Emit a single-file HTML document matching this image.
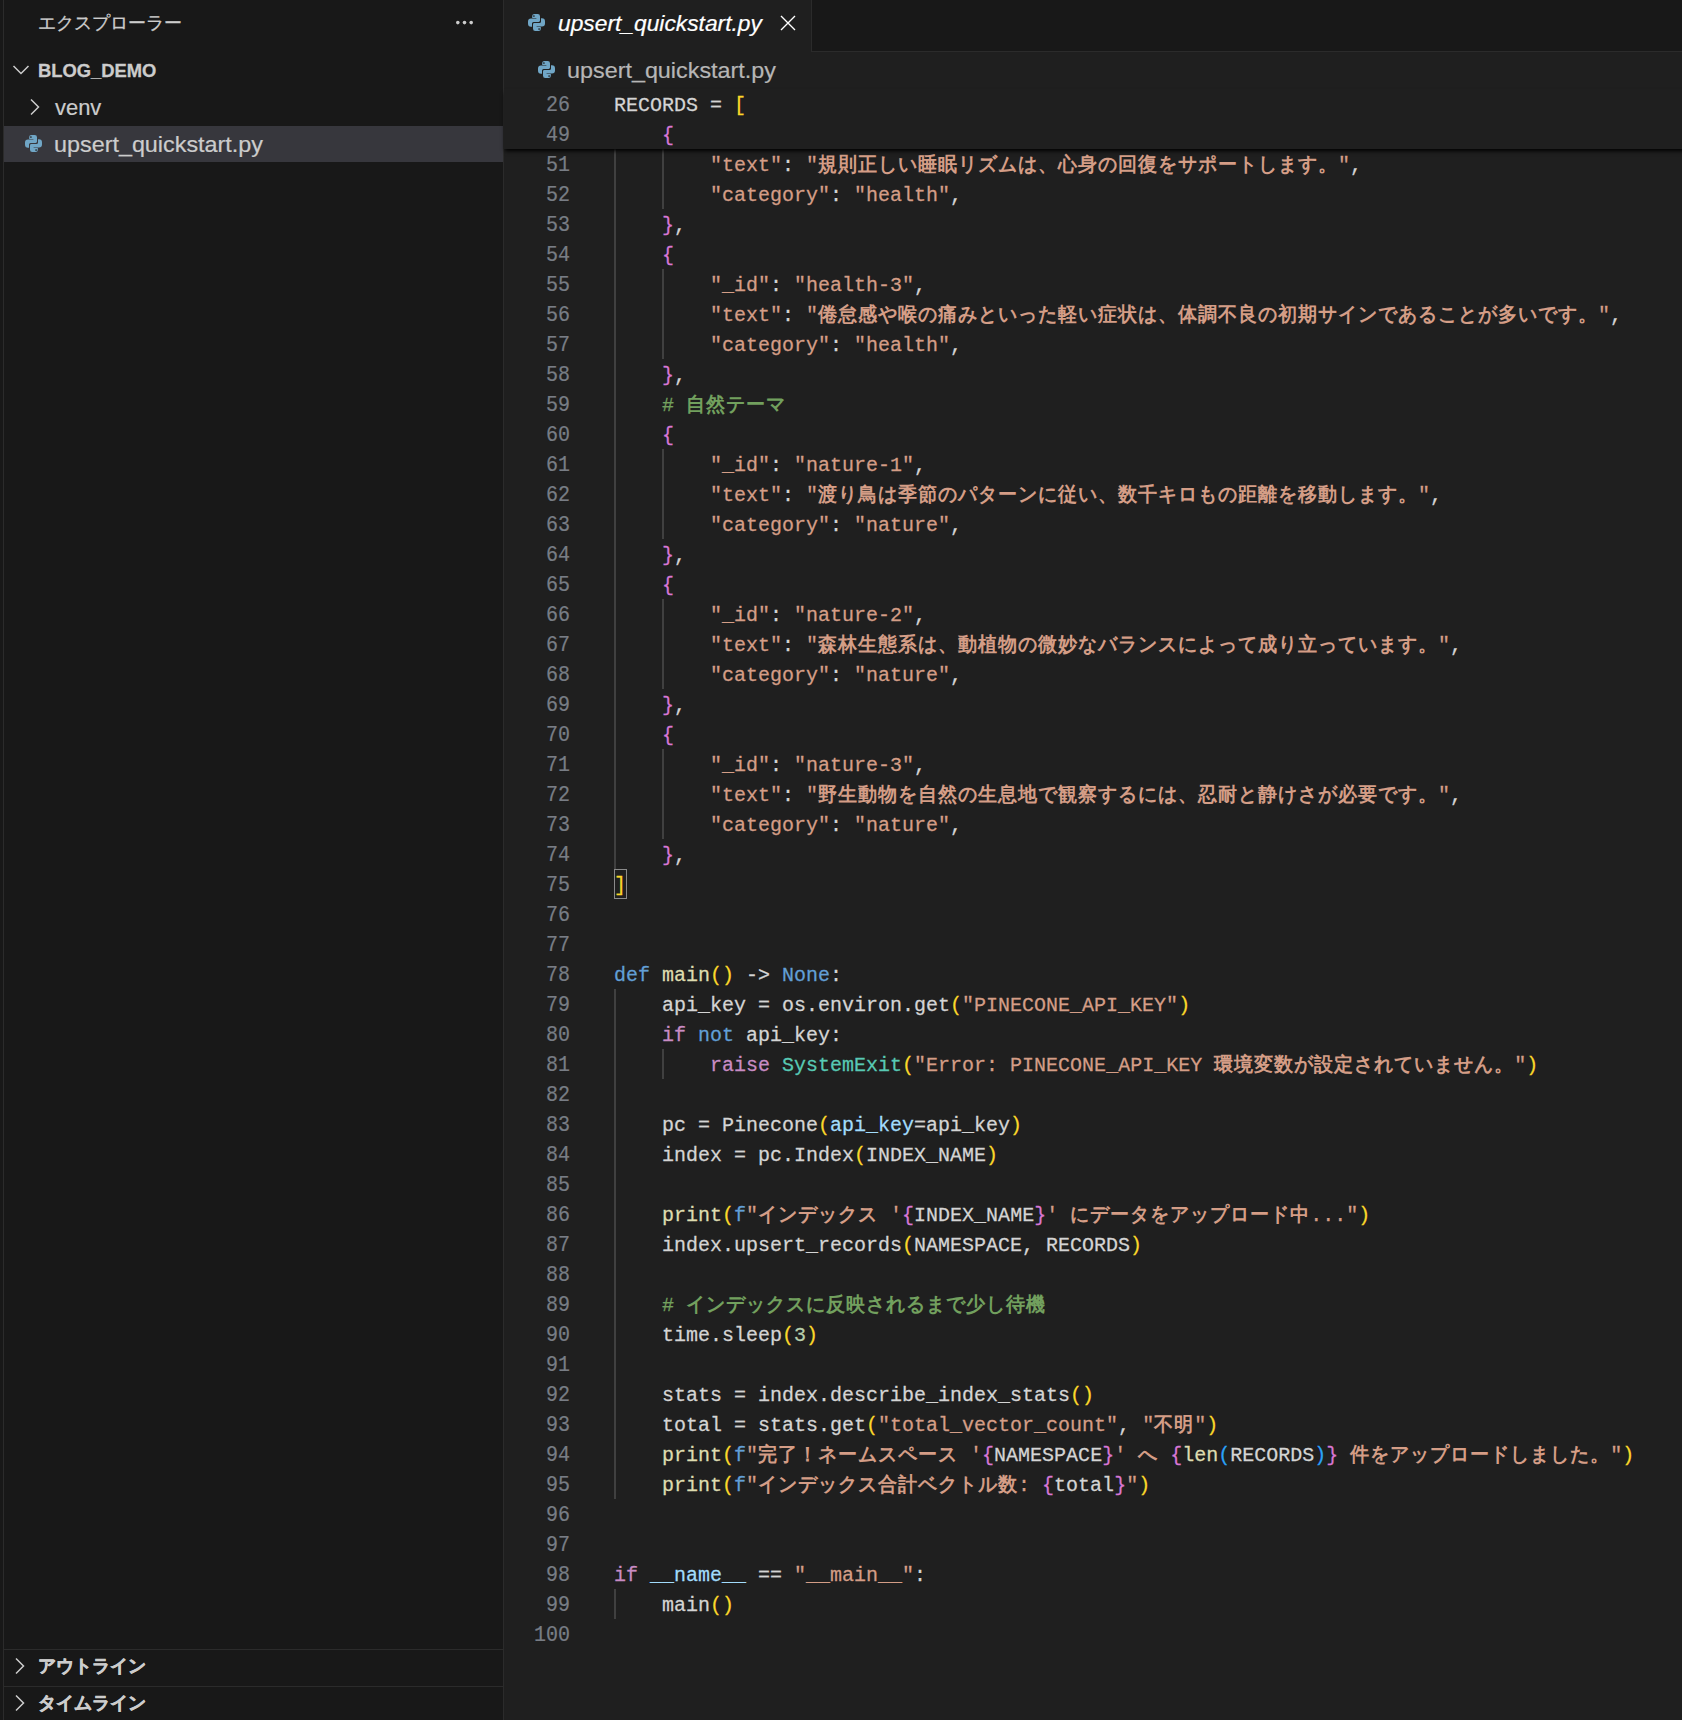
<!DOCTYPE html>
<html lang="ja"><head><meta charset="utf-8"><title>upsert_quickstart.py</title>
<style>
*{margin:0;padding:0;box-sizing:border-box}
html,body{width:1682px;height:1720px;overflow:hidden;background:#1f1f1f}
body{position:relative;font-family:"Liberation Sans",sans-serif;color:#cccccc}
.abs{position:absolute}
#side{position:absolute;left:0;top:0;width:503px;height:1720px;background:#181818}
#sideb{position:absolute;left:503px;top:0;width:1px;height:1720px;background:#2b2b2b}
#leftl{position:absolute;left:3px;top:0;width:1px;height:1720px;background:#2b2b2b}
.st{position:absolute;white-space:nowrap}
#tabs{position:absolute;left:504px;top:0;width:1178px;height:52px;background:#181818;border-bottom:1px solid #2b2b2b}
#tab{position:absolute;left:504px;top:0;width:307px;height:52px;background:#1f1f1f}
#tabr{position:absolute;left:811px;top:0;width:1px;height:52px;background:#2b2b2b}
#sticky{position:absolute;left:504px;top:89px;width:1220px;height:60px;background:#1f1f1f;box-shadow:0 3px 4px -1px #000}
.ln{position:absolute;left:504px;width:66px;height:30px;line-height:30px;padding-top:2px;-webkit-text-stroke:0.2px currentColor;transform:scaleY(1.13);transform-origin:0 22px;text-align:right;font-family:"Liberation Mono",monospace;font-size:20px;color:#787d85;white-space:pre}
.cl{position:absolute;left:614px;height:30px;line-height:30px;padding-top:2px;-webkit-text-stroke:0.25px currentColor;transform:scaleY(1.05);transform-origin:0 22px;font-family:"Liberation Mono",monospace;font-size:20px;color:#d4d4d4;white-space:pre}
.ig{position:absolute;width:2px;background:#404040}
.d{color:#d4d4d4} .s{color:#d49d86} .k{color:#629fd6} .c{color:#c98cc4} .f{color:#dedcb0} .t{color:#58c9b4}
.v{color:#a2dcfc} .m{color:#72a05e} .n{color:#b8cfac} .y{color:#fbd82a} .p{color:#d877d4} .b{color:#2aa2f8}
.j{font-weight:700;font-size:19px;letter-spacing:1px;-webkit-text-stroke:0}
.bm{outline:1px solid #888888;outline-offset:0}
</style></head><body>
<div id="side"></div>
<div id="leftl"></div>
<div class="st" style="left:38px;top:11px;font-size:18px;line-height:24px;color:#cccccc;-webkit-text-stroke:0.3px #cccccc">エクスプローラー</div>
<div class="abs" style="left:455px;top:19px;line-height:0"><svg width="20" height="6" viewBox="0 0 20 6"><circle cx="2.8" cy="3.6" r="1.8" fill="#cccccc"/><circle cx="9.5" cy="3.6" r="1.8" fill="#cccccc"/><circle cx="16.2" cy="3.6" r="1.8" fill="#cccccc"/></svg></div>
<div class="abs" style="left:12px;top:64px;line-height:0"><svg width="18" height="12" viewBox="0 0 18 12"><path d="M1.5 2L9 9.5L16.5 2" fill="none" stroke="#cccccc" stroke-width="1.5"/></svg></div>
<div class="st" style="left:38px;top:59px;font-size:18px;line-height:24px;font-weight:bold;color:#cccccc;transform:scaleX(1.02);transform-origin:0 0;-webkit-text-stroke:0.3px #cccccc">BLOG_DEMO</div>
<div class="abs" style="left:29px;top:98px;line-height:0"><svg width="12" height="18" viewBox="0 0 12 18"><path d="M2 1.5L9.5 9L2 16.5" fill="none" stroke="#cccccc" stroke-width="1.5"/></svg></div>
<div class="st" style="left:55px;top:95px;font-size:21.5px;line-height:26px;color:#cccccc;transform:scaleX(1.02);transform-origin:0 0;-webkit-text-stroke:0.2px #cccccc">venv</div>
<div class="abs" style="left:4px;top:126px;width:499px;height:36px;background:#37373d"></div>
<div class="abs" style="left:25px;top:135px;line-height:0"><svg width="17" height="17" viewBox="0 0 17 17"><path fill="#70a6c6" d="M6.3 0H9.7Q12 0 12 2.3V6.6Q12 8 10.6 8H5.6Q4 8 4 9.6V12.7H3Q0 12.7 0 9.4V7.6Q0 4.6 3 4.6H8.4V4.1H4.2V2.1Q4.2 0 6.3 0Z"/><path fill="#70a6c6" d="M10.7 17H7.3Q5 17 5 14.7V10.4Q5 9 6.4 9H11.4Q13 9 13 7.4V4.3H14Q17 4.3 17 7.6V9.4Q17 12.4 14 12.4H8.6V12.9H12.8V14.9Q12.8 17 10.7 17Z"/><circle cx="5.9" cy="2" r="0.85" fill="#1f1f1f"/><circle cx="11.1" cy="15" r="0.85" fill="#1f1f1f"/></svg></div>
<div class="st" style="left:54px;top:132px;font-size:21.5px;line-height:26px;color:#cccccc;transform:scaleX(1.086);transform-origin:0 0;-webkit-text-stroke:0.2px #cccccc">upsert_quickstart.py</div>
<div class="abs" style="left:4px;top:1649px;width:499px;height:1px;background:#2b2b2b"></div>
<div class="abs" style="left:14px;top:1657px;line-height:0"><svg width="12" height="18" viewBox="0 0 12 18"><path d="M2 1.5L9.5 9L2 16.5" fill="none" stroke="#cccccc" stroke-width="1.5"/></svg></div>
<div class="st" style="left:38px;top:1654px;font-size:18px;line-height:24px;font-weight:bold;color:#cccccc;-webkit-text-stroke:0.5px #cccccc">アウトライン</div>
<div class="abs" style="left:4px;top:1686px;width:499px;height:1px;background:#2b2b2b"></div>
<div class="abs" style="left:14px;top:1694px;line-height:0"><svg width="12" height="18" viewBox="0 0 12 18"><path d="M2 1.5L9.5 9L2 16.5" fill="none" stroke="#cccccc" stroke-width="1.5"/></svg></div>
<div class="st" style="left:38px;top:1691px;font-size:18px;line-height:24px;font-weight:bold;color:#cccccc;-webkit-text-stroke:0.5px #cccccc">タイムライン</div>
<div id="sideb"></div>

<div id="tabs"></div>
<div id="tab"></div>
<div id="tabr"></div>
<div class="abs" style="left:528px;top:14px;line-height:0"><svg width="17" height="17" viewBox="0 0 17 17"><path fill="#70a6c6" d="M6.3 0H9.7Q12 0 12 2.3V6.6Q12 8 10.6 8H5.6Q4 8 4 9.6V12.7H3Q0 12.7 0 9.4V7.6Q0 4.6 3 4.6H8.4V4.1H4.2V2.1Q4.2 0 6.3 0Z"/><path fill="#70a6c6" d="M10.7 17H7.3Q5 17 5 14.7V10.4Q5 9 6.4 9H11.4Q13 9 13 7.4V4.3H14Q17 4.3 17 7.6V9.4Q17 12.4 14 12.4H8.6V12.9H12.8V14.9Q12.8 17 10.7 17Z"/><circle cx="5.9" cy="2" r="0.85" fill="#1f1f1f"/><circle cx="11.1" cy="15" r="0.85" fill="#1f1f1f"/></svg></div>
<div class="st" style="left:558px;top:11px;font-size:21.5px;line-height:26px;font-style:italic;color:#ffffff;transform:scaleX(1.06);transform-origin:0 0;-webkit-text-stroke:0.2px #ffffff">upsert_quickstart.py</div>
<div class="abs" style="left:780px;top:15px;line-height:0"><svg width="16" height="16" viewBox="0 0 16 16"><path d="M1 1L15 15M15 1L1 15" fill="none" stroke="#ffffff" stroke-width="1.4"/></svg></div>

<div class="abs" style="left:538px;top:61px;line-height:0"><svg width="17" height="17" viewBox="0 0 17 17"><path fill="#70a6c6" d="M6.3 0H9.7Q12 0 12 2.3V6.6Q12 8 10.6 8H5.6Q4 8 4 9.6V12.7H3Q0 12.7 0 9.4V7.6Q0 4.6 3 4.6H8.4V4.1H4.2V2.1Q4.2 0 6.3 0Z"/><path fill="#70a6c6" d="M10.7 17H7.3Q5 17 5 14.7V10.4Q5 9 6.4 9H11.4Q13 9 13 7.4V4.3H14Q17 4.3 17 7.6V9.4Q17 12.4 14 12.4H8.6V12.9H12.8V14.9Q12.8 17 10.7 17Z"/><circle cx="5.9" cy="2" r="0.85" fill="#1f1f1f"/><circle cx="11.1" cy="15" r="0.85" fill="#1f1f1f"/></svg></div>
<div class="st" style="left:567px;top:58px;font-size:21.5px;line-height:26px;color:#b6b6b6;transform:scaleX(1.086);transform-origin:0 0;-webkit-text-stroke:0.2px #b6b6b6">upsert_quickstart.py</div>

<div class="ig" style="left:614px;top:149px;height:720px"></div><div class="ig" style="left:662px;top:149px;height:60px"></div><div class="ig" style="left:662px;top:269px;height:90px"></div><div class="ig" style="left:662px;top:449px;height:90px"></div><div class="ig" style="left:662px;top:599px;height:90px"></div><div class="ig" style="left:662px;top:749px;height:90px"></div><div class="ig" style="left:614px;top:989px;height:510px"></div><div class="ig" style="left:662px;top:1049px;height:30px"></div><div class="ig" style="left:614px;top:1589px;height:30px"></div>
<div class="abs" style="left:614px;top:869px;width:13px;height:30px;border:1px solid #8a8a8a"></div>
<div class="ln" style="top:149px">51</div><div class="cl" style="top:149px"><span class="d">        </span><span class="s">"text"</span><span class="d">: </span><span class="s">"<span class="j">規則正しい睡眠リズムは、心身の回復をサポートします。</span>"</span><span class="d">,</span></div><div class="ln" style="top:179px">52</div><div class="cl" style="top:179px"><span class="d">        </span><span class="s">"category"</span><span class="d">: </span><span class="s">"health"</span><span class="d">,</span></div><div class="ln" style="top:209px">53</div><div class="cl" style="top:209px"><span class="d">    </span><span class="p">}</span><span class="d">,</span></div><div class="ln" style="top:239px">54</div><div class="cl" style="top:239px"><span class="d">    </span><span class="p">{</span></div><div class="ln" style="top:269px">55</div><div class="cl" style="top:269px"><span class="d">        </span><span class="s">"_id"</span><span class="d">: </span><span class="s">"health-3"</span><span class="d">,</span></div><div class="ln" style="top:299px">56</div><div class="cl" style="top:299px"><span class="d">        </span><span class="s">"text"</span><span class="d">: </span><span class="s">"<span class="j">倦怠感や喉の痛みといった軽い症状は、体調不良の初期サインであることが多いです。</span>"</span><span class="d">,</span></div><div class="ln" style="top:329px">57</div><div class="cl" style="top:329px"><span class="d">        </span><span class="s">"category"</span><span class="d">: </span><span class="s">"health"</span><span class="d">,</span></div><div class="ln" style="top:359px">58</div><div class="cl" style="top:359px"><span class="d">    </span><span class="p">}</span><span class="d">,</span></div><div class="ln" style="top:389px">59</div><div class="cl" style="top:389px"><span class="d">    </span><span class="m"># <span class="j">自然テーマ</span></span></div><div class="ln" style="top:419px">60</div><div class="cl" style="top:419px"><span class="d">    </span><span class="p">{</span></div><div class="ln" style="top:449px">61</div><div class="cl" style="top:449px"><span class="d">        </span><span class="s">"_id"</span><span class="d">: </span><span class="s">"nature-1"</span><span class="d">,</span></div><div class="ln" style="top:479px">62</div><div class="cl" style="top:479px"><span class="d">        </span><span class="s">"text"</span><span class="d">: </span><span class="s">"<span class="j">渡り鳥は季節のパターンに従い、数千キロもの距離を移動します。</span>"</span><span class="d">,</span></div><div class="ln" style="top:509px">63</div><div class="cl" style="top:509px"><span class="d">        </span><span class="s">"category"</span><span class="d">: </span><span class="s">"nature"</span><span class="d">,</span></div><div class="ln" style="top:539px">64</div><div class="cl" style="top:539px"><span class="d">    </span><span class="p">}</span><span class="d">,</span></div><div class="ln" style="top:569px">65</div><div class="cl" style="top:569px"><span class="d">    </span><span class="p">{</span></div><div class="ln" style="top:599px">66</div><div class="cl" style="top:599px"><span class="d">        </span><span class="s">"_id"</span><span class="d">: </span><span class="s">"nature-2"</span><span class="d">,</span></div><div class="ln" style="top:629px">67</div><div class="cl" style="top:629px"><span class="d">        </span><span class="s">"text"</span><span class="d">: </span><span class="s">"<span class="j">森林生態系は、動植物の微妙なバランスによって成り立っています。</span>"</span><span class="d">,</span></div><div class="ln" style="top:659px">68</div><div class="cl" style="top:659px"><span class="d">        </span><span class="s">"category"</span><span class="d">: </span><span class="s">"nature"</span><span class="d">,</span></div><div class="ln" style="top:689px">69</div><div class="cl" style="top:689px"><span class="d">    </span><span class="p">}</span><span class="d">,</span></div><div class="ln" style="top:719px">70</div><div class="cl" style="top:719px"><span class="d">    </span><span class="p">{</span></div><div class="ln" style="top:749px">71</div><div class="cl" style="top:749px"><span class="d">        </span><span class="s">"_id"</span><span class="d">: </span><span class="s">"nature-3"</span><span class="d">,</span></div><div class="ln" style="top:779px">72</div><div class="cl" style="top:779px"><span class="d">        </span><span class="s">"text"</span><span class="d">: </span><span class="s">"<span class="j">野生動物を自然の生息地で観察するには、忍耐と静けさが必要です。</span>"</span><span class="d">,</span></div><div class="ln" style="top:809px">73</div><div class="cl" style="top:809px"><span class="d">        </span><span class="s">"category"</span><span class="d">: </span><span class="s">"nature"</span><span class="d">,</span></div><div class="ln" style="top:839px">74</div><div class="cl" style="top:839px"><span class="d">    </span><span class="p">}</span><span class="d">,</span></div><div class="ln" style="top:869px">75</div><div class="cl" style="top:869px"><span class="y">]</span></div><div class="ln" style="top:899px">76</div><div class="cl" style="top:899px"></div><div class="ln" style="top:929px">77</div><div class="cl" style="top:929px"></div><div class="ln" style="top:959px">78</div><div class="cl" style="top:959px"><span class="k">def</span><span class="d"> </span><span class="f">main</span><span class="y">()</span><span class="d"> -&gt; </span><span class="k">None</span><span class="d">:</span></div><div class="ln" style="top:989px">79</div><div class="cl" style="top:989px"><span class="d">    api_key = os.environ.get</span><span class="y">(</span><span class="s">"PINECONE_API_KEY"</span><span class="y">)</span></div><div class="ln" style="top:1019px">80</div><div class="cl" style="top:1019px"><span class="d">    </span><span class="c">if</span><span class="d"> </span><span class="k">not</span><span class="d"> api_key:</span></div><div class="ln" style="top:1049px">81</div><div class="cl" style="top:1049px"><span class="d">        </span><span class="c">raise</span><span class="d"> </span><span class="t">SystemExit</span><span class="y">(</span><span class="s">"Error: PINECONE_API_KEY <span class="j">環境変数が設定されていません。</span>"</span><span class="y">)</span></div><div class="ln" style="top:1079px">82</div><div class="cl" style="top:1079px"></div><div class="ln" style="top:1109px">83</div><div class="cl" style="top:1109px"><span class="d">    pc = Pinecone</span><span class="y">(</span><span class="v">api_key</span><span class="d">=api_key</span><span class="y">)</span></div><div class="ln" style="top:1139px">84</div><div class="cl" style="top:1139px"><span class="d">    index = pc.Index</span><span class="y">(</span><span class="d">INDEX_NAME</span><span class="y">)</span></div><div class="ln" style="top:1169px">85</div><div class="cl" style="top:1169px"></div><div class="ln" style="top:1199px">86</div><div class="cl" style="top:1199px"><span class="d">    </span><span class="f">print</span><span class="y">(</span><span class="k">f</span><span class="s">"<span class="j">インデックス</span> '</span><span class="p">{</span><span class="d">INDEX_NAME</span><span class="p">}</span><span class="s">' <span class="j">にデータをアップロード中</span>..."</span><span class="y">)</span></div><div class="ln" style="top:1229px">87</div><div class="cl" style="top:1229px"><span class="d">    index.upsert_records</span><span class="y">(</span><span class="d">NAMESPACE, RECORDS</span><span class="y">)</span></div><div class="ln" style="top:1259px">88</div><div class="cl" style="top:1259px"></div><div class="ln" style="top:1289px">89</div><div class="cl" style="top:1289px"><span class="d">    </span><span class="m"># <span class="j">インデックスに反映されるまで少し待機</span></span></div><div class="ln" style="top:1319px">90</div><div class="cl" style="top:1319px"><span class="d">    time.sleep</span><span class="y">(</span><span class="n">3</span><span class="y">)</span></div><div class="ln" style="top:1349px">91</div><div class="cl" style="top:1349px"></div><div class="ln" style="top:1379px">92</div><div class="cl" style="top:1379px"><span class="d">    stats = index.describe_index_stats</span><span class="y">()</span></div><div class="ln" style="top:1409px">93</div><div class="cl" style="top:1409px"><span class="d">    total = stats.get</span><span class="y">(</span><span class="s">"total_vector_count"</span><span class="d">, </span><span class="s">"<span class="j">不明</span>"</span><span class="y">)</span></div><div class="ln" style="top:1439px">94</div><div class="cl" style="top:1439px"><span class="d">    </span><span class="f">print</span><span class="y">(</span><span class="k">f</span><span class="s">"<span class="j">完了！ネームスペース</span> '</span><span class="p">{</span><span class="d">NAMESPACE</span><span class="p">}</span><span class="s">' <span class="j">へ</span> </span><span class="p">{</span><span class="f">len</span><span class="b">(</span><span class="d">RECORDS</span><span class="b">)</span><span class="p">}</span><span class="s"> <span class="j">件をアップロードしました。</span>"</span><span class="y">)</span></div><div class="ln" style="top:1469px">95</div><div class="cl" style="top:1469px"><span class="d">    </span><span class="f">print</span><span class="y">(</span><span class="k">f</span><span class="s">"<span class="j">インデックス合計ベクトル数</span>: </span><span class="p">{</span><span class="d">total</span><span class="p">}</span><span class="s">"</span><span class="y">)</span></div><div class="ln" style="top:1499px">96</div><div class="cl" style="top:1499px"></div><div class="ln" style="top:1529px">97</div><div class="cl" style="top:1529px"></div><div class="ln" style="top:1559px">98</div><div class="cl" style="top:1559px"><span class="c">if</span><span class="d"> </span><span class="v">__name__</span><span class="d"> == </span><span class="s">"__main__"</span><span class="d">:</span></div><div class="ln" style="top:1589px">99</div><div class="cl" style="top:1589px"><span class="d">    main</span><span class="y">()</span></div><div class="ln" style="top:1619px">100</div><div class="cl" style="top:1619px"></div>

<div id="sticky"></div>
<div class="ln" style="top:89px">26</div><div class="cl" style="top:89px">RECORDS = <span class="y">[</span></div>
<div class="ln" style="top:119px">49</div><div class="cl" style="top:119px">    <span class="p">{</span></div>
</body></html>
